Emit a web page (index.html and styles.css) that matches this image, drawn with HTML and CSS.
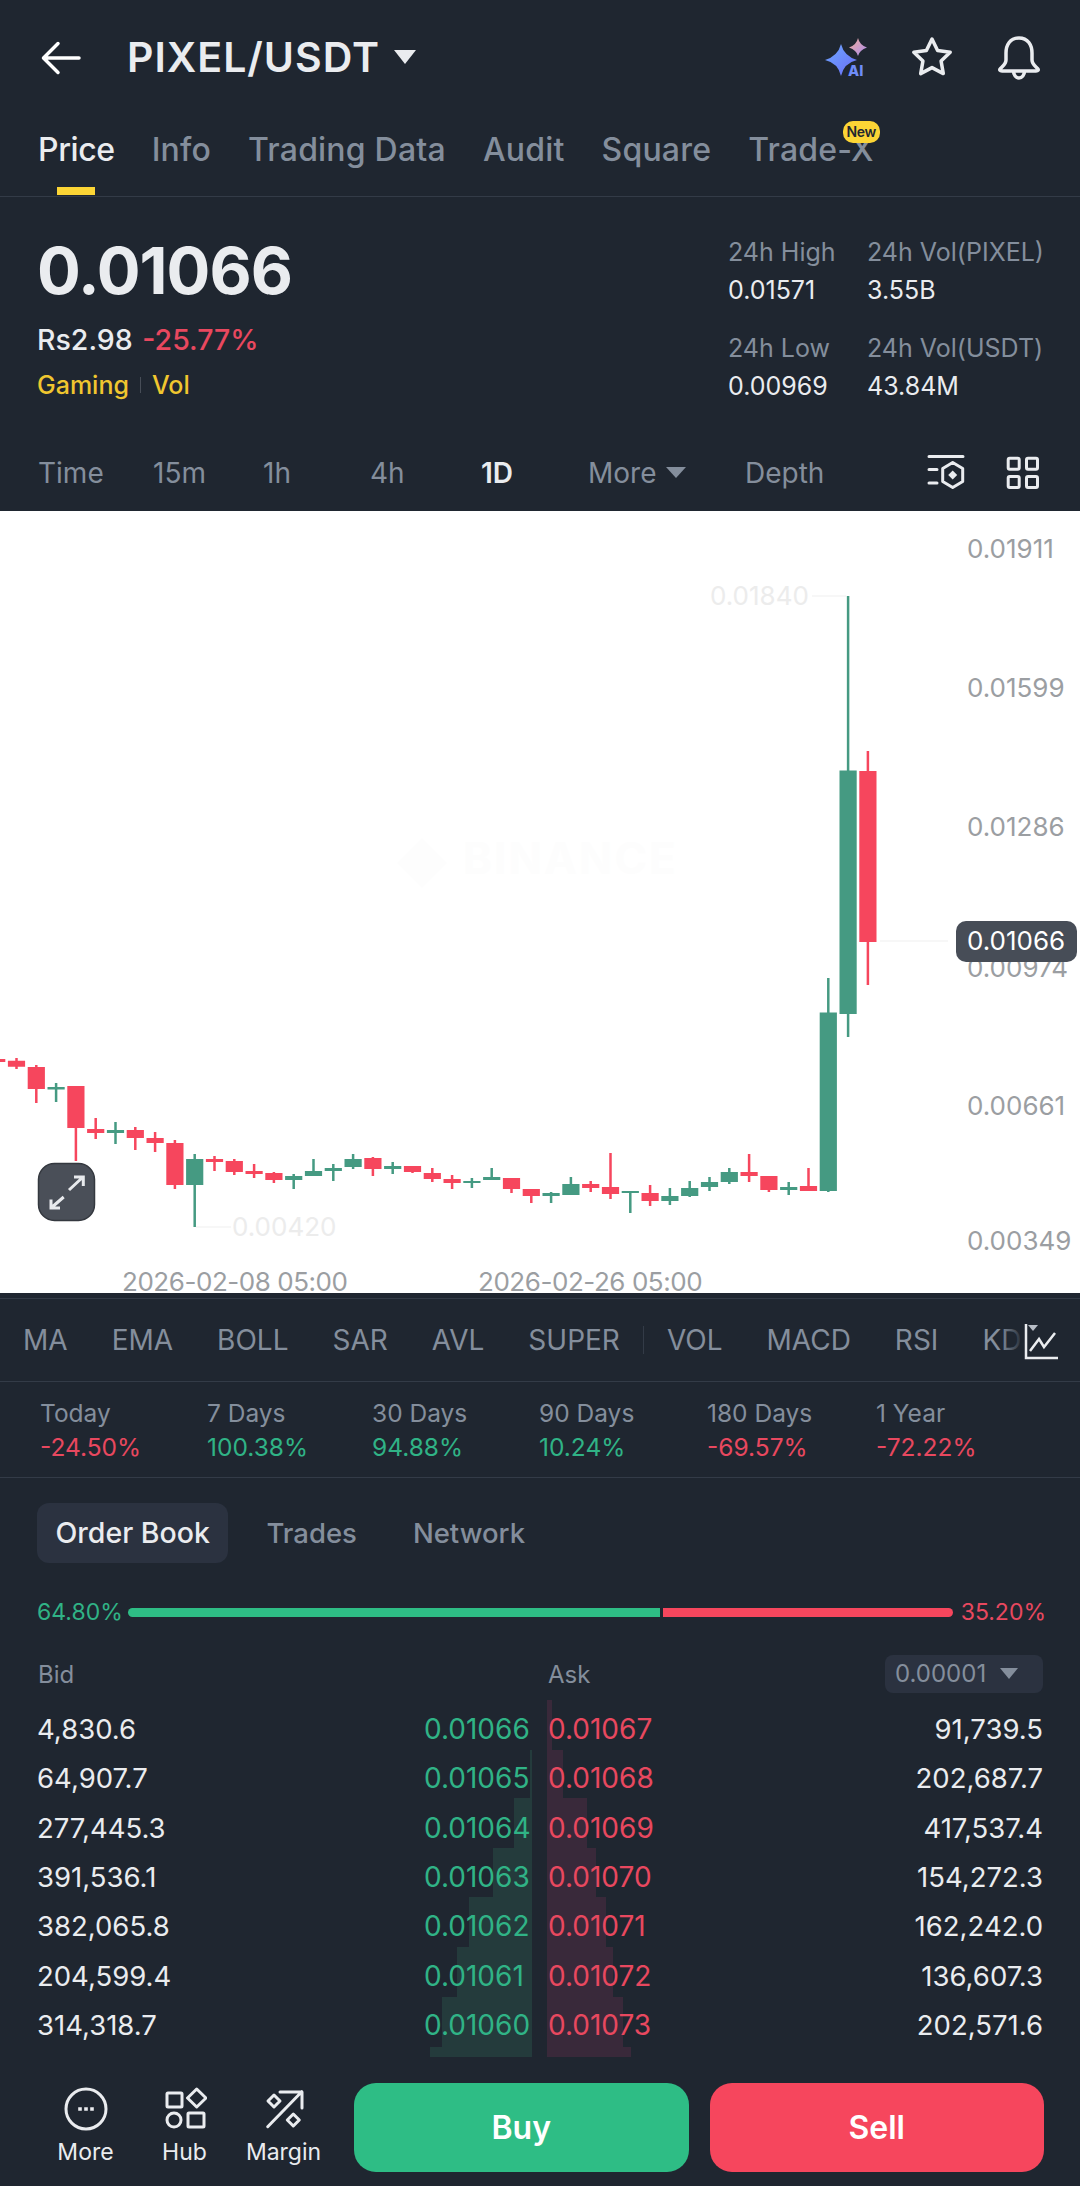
FILE: index.html
```html
<!DOCTYPE html>
<html lang="en">
<head>
    <meta charset="UTF-8">
    <meta name="viewport" content="width=device-width, initial-scale=1.0">
    <title>PIXEL/USDT</title>
    <link rel="stylesheet" href="styles.css">
</head>
<body>
    <!-- --- HEADER --- -->
    <header class="header">
        <svg class="back" width="46" height="40" viewBox="0 0 46 40"><path d="M41 20H6.500M20 5.500 5.500 20 20 34.500"/></svg>
        <span class="pair">PIXEL/USDT</span>
        <span class="caret caret-title"></span>
        <div class="header-icons">
            <svg width="44" height="46" viewBox="0 0 44 46">
                <defs>
                    <linearGradient id="big" x1="0" y1="0" x2="1" y2="1"><stop offset="0" stop-color="#6ea8ff"/><stop offset="1" stop-color="#6a6cf6"/></linearGradient>
                    <linearGradient id="small" x1="0" y1="0" x2="1" y2="1"><stop offset="0" stop-color="#f2ab96"/><stop offset="1" stop-color="#a88cf2"/></linearGradient>
                </defs>
                <path fill="url(#big)" d="M18 9Q21 21 34 25Q21 28 18 41Q15 28 2 25Q15 21 18 9Z"/>
                <path fill="url(#small)" d="M35 3Q36.500 10 44 12.500Q36.500 15 35 21Q33.500 15 26 12.500Q33.500 10 35 3Z"/>
                <text class="ai-text" x="25" y="41">AI</text>
            </svg>
            <svg class="line-icon" width="44" height="46" viewBox="0 0 44 46"><path d="M22 4l5.600 11.400 12.600 1.800-9.100 8.900 2.200 12.500L22 32.600l-11.300 6 2.200-12.500-9.100-8.900 12.600-1.800z"/></svg>
            <svg class="line-icon" width="44" height="46" viewBox="0 0 44 46"><path d="M22 3C13 3 9 10 9 18V25C9 29 6 31 3.500 33.500C2 35 3 36 5 36H39C41 36 42 35 40.500 33.500C38 31 35 29 35 25V18C35 10 31 3 22 3ZM16.500 36C16.500 40 19 43 22 43C25 43 27.500 40 27.500 36"/></svg>
        </div>
    </header>

    <!-- --- TABS --- -->
    <nav class="tabs">
        <span class="tab tab-active">Price</span>
        <span class="tab">Info</span>
        <span class="tab">Trading Data</span>
        <span class="tab">Audit</span>
        <span class="tab">Square</span>
        <span class="tab tab-new">Trade-X<span class="badge">New</span></span>
    </nav>

    <!-- --- PRICE SUMMARY --- -->
    <section class="summary">
        <div class="summary-main">
            <div class="last-price">0.01066</div>
            <div class="fiat">Rs2.98 <span class="down">-25.77%</span></div>
            <div class="tags"><span>Gaming</span><i></i><span>Vol</span></div>
        </div>
        <div class="stats">
            <div class="stat-label">24h High</div><div class="stat-label">24h Vol(PIXEL)</div>
            <div class="stat-value">0.01571</div><div class="stat-value">3.55B</div>
            <div class="stat-label stat-gap">24h Low</div><div class="stat-label stat-gap">24h Vol(USDT)</div>
            <div class="stat-value">0.00969</div><div class="stat-value">43.84M</div>
        </div>
    </section>

    <!-- --- TIMEFRAMES --- -->
    <div class="frames">
        <span>Time</span>
        <span>15m</span>
        <span>1h</span>
        <span>4h</span>
        <span class="frame-active">1D</span>
        <span>More<b class="caret caret-more"></b></span>
        <span>Depth</span>
        <div class="frame-icons">
            <svg class="line-icon thin" width="40" height="40" viewBox="0 0 40 40"><path d="M3 3.500H37M3 16.500H11M3 30H11M26.700 9.500 36.700 15.500V28.500L26.700 34.500 16.700 28.500V15.500Z"/><path class="solid" d="M26.700 17.500 31.200 22 26.700 26.500 22.200 22Z"/></svg>
            <svg class="line-icon thin" width="38" height="38" viewBox="0 0 38 38"><rect x="4.200" y="4.200" width="11" height="11" rx="1.500"/><rect x="22.500" y="4.200" width="11" height="11" rx="1.500"/><rect x="4.200" y="22.500" width="11" height="11" rx="1.500"/><rect x="22.500" y="22.500" width="11" height="11" rx="1.500"/></svg>
        </div>
    </div>

    <!-- --- CHART --- -->
    <svg class="chart" width="1080" height="782" viewBox="0 511 1080 782">
        <text class="watermark" x="463" y="874">BINANCE</text>
        <path class="watermark-logo" d="M422 838 447 863 422 888 397 863Z"/>

        <path class="wick red" d="M-3.300 1059V1062M16.500 1058V1069M36.300 1065V1103M75.900 1086V1161M95.700 1118V1139M135.300 1127V1150M155.100 1132V1152M174.900 1140V1189M214.500 1156V1171M234.300 1159V1175M254.100 1164V1178M273.900 1172V1183M372.900 1157V1176M412.500 1166V1173M432.300 1168V1182M452.100 1175V1189M511.500 1178V1193M531.300 1189V1203M590.700 1181V1192M610.500 1153V1199M650.100 1185V1206M749.100 1154V1182M768.900 1176V1192M808.500 1168V1191M867.900 751V985"/>
        <path class="wick green" d="M56.100 1083V1102M115.500 1122V1144M194.700 1154V1227M293.700 1174V1189M313.500 1159V1176M333.300 1164V1181M353.100 1154V1169M392.700 1162V1174M471.900 1178V1188M491.700 1168V1180M551.100 1192V1203M570.900 1177V1195M630.300 1191V1213M669.900 1188V1205M689.700 1181V1197M709.500 1177V1191M729.300 1168V1184M788.700 1182V1195M828.300 978V1192M848.100 596V1037"/>
        <path class="body red" d="M-3.300 1059V1062M16.500 1060.700V1066.700M36.300 1067V1089M75.900 1086V1128M95.700 1129V1133M135.300 1130V1138M155.100 1138V1143M174.900 1143V1185M214.500 1159V1162M234.300 1161V1172M254.100 1171V1174M273.900 1173V1180M372.900 1158V1169M412.500 1166V1172M432.300 1173V1179M452.100 1179V1183M511.500 1178V1189M531.300 1189V1196M590.700 1184V1188M610.500 1187V1194M650.100 1193V1201M749.100 1172V1176M768.900 1176V1190M808.500 1186V1191M867.900 771V942"/>
        <path class="body green" d="M56.100 1087V1089.500M115.500 1130V1133M194.700 1159V1185M293.700 1176V1180M313.500 1171V1176M333.300 1168V1171M353.100 1159V1167M392.700 1166V1169M471.900 1181V1183M491.700 1177V1180M551.100 1193V1196M570.900 1184V1195M630.300 1191V1193M669.900 1196V1201M689.700 1188V1196M709.500 1182V1187M729.300 1172V1182M788.700 1187V1190M828.300 1012.500V1191M848.100 770.500V1014"/>

        <path class="hair" d="M812 596H846M196 1227H231M880 941H948"/>
        <text class="extreme" x="710" y="605">0.01840</text>
        <text class="extreme" x="232" y="1236">0.00420</text>

        <text class="axis" x="967" y="558">0.01911</text>
        <text class="axis" x="967" y="697">0.01599</text>
        <text class="axis" x="967" y="836">0.01286</text>
        <text class="axis" x="967" y="977">0.00974</text>
        <text class="axis" x="967" y="1115">0.00661</text>
        <text class="axis" x="967" y="1250">0.00349</text>
        <text class="axis axis-date" x="122" y="1291">2026-02-08 05:00</text>
        <text class="axis axis-date" x="478" y="1291">2026-02-26 05:00</text>

        <rect class="tag" x="956" y="921" width="121" height="41" rx="10"/>
        <text class="tag-text" x="967" y="950">0.01066</text>

        <rect class="expand" x="38.500" y="1163.500" width="56" height="57" rx="16"/>
        <path class="expand-arrows" d="M69 1190 83 1177M74 1177H83.300V1186M63.700 1197 51 1208M51 1199.500V1208H60"/>
    </svg>

    <!-- --- INDICATORS --- -->
    <div class="indicators">
        <span>MA</span><span>EMA</span><span>BOLL</span><span>SAR</span><span>AVL</span><span>SUPER</span>
        <i class="ind-divider"></i>
        <span>VOL</span><span>MACD</span><span>RSI</span><span>KDJ</span>
        <div class="ind-chart">
            <svg width="38" height="38" viewBox="0 0 38 38"><path class="ind-tri" d="M8 2H18L13 8Z"/><path class="ind-line" d="M6 1V35H38M10 28 19 16 24 24 35 10"/></svg>
        </div>
    </div>

    <!-- --- PERIOD CHANGES --- -->
    <div class="periods">
        <div><div class="period-label">Today</div><div class="period-value down">-24.50%</div></div>
        <div><div class="period-label">7 Days</div><div class="period-value up">100.38%</div></div>
        <div><div class="period-label">30 Days</div><div class="period-value up">94.88%</div></div>
        <div><div class="period-label">90 Days</div><div class="period-value up">10.24%</div></div>
        <div><div class="period-label">180 Days</div><div class="period-value down">-69.57%</div></div>
        <div><div class="period-label">1 Year</div><div class="period-value down">-72.22%</div></div>
    </div>

    <!-- --- ORDER BOOK --- -->
    <div class="book-tabs">
        <span class="book-tab book-tab-active">Order Book</span>
        <span class="book-tab">Trades</span>
        <span class="book-tab">Network</span>
    </div>

    <div class="ratio">
        <span class="up">64.80%</span>
        <div class="ratio-bar"><i class="ratio-bid"></i><i class="ratio-ask"></i></div>
        <span class="down ratio-right">35.20%</span>
    </div>

    <div class="book-head">
        <span class="book-head-bid">Bid</span>
        <span class="book-head-ask">Ask</span>
        <span class="step">0.00001<b class="caret caret-step"></b></span>
    </div>

    <div class="book">
        <svg class="depth" width="1080" height="360" viewBox="0 1700 1080 360">
            <path class="depth-bid" d="M532 1750H530V1798H514V1848H493V1897H469V1947H457V1997H442V2047H430V2057H532Z"/>
            <path class="depth-ask" d="M547 1700H552V1750H563V1798H587V1848H596V1897H606V1947H613V1997H623V2047H631V2057H547Z"/>
        </svg>
        <div class="row"><div class="side"><span>4,830.6</span><span class="price up">0.01066</span></div><div class="side"><span class="price down">0.01067</span><span>91,739.5</span></div></div>
        <div class="row"><div class="side"><span>64,907.7</span><span class="price up">0.01065</span></div><div class="side"><span class="price down">0.01068</span><span>202,687.7</span></div></div>
        <div class="row"><div class="side"><span>277,445.3</span><span class="price up">0.01064</span></div><div class="side"><span class="price down">0.01069</span><span>417,537.4</span></div></div>
        <div class="row"><div class="side"><span>391,536.1</span><span class="price up">0.01063</span></div><div class="side"><span class="price down">0.01070</span><span>154,272.3</span></div></div>
        <div class="row"><div class="side"><span>382,065.8</span><span class="price up">0.01062</span></div><div class="side"><span class="price down">0.01071</span><span>162,242.0</span></div></div>
        <div class="row"><div class="side"><span>204,599.4</span><span class="price up">0.01061</span></div><div class="side"><span class="price down">0.01072</span><span>136,607.3</span></div></div>
        <div class="row"><div class="side"><span>314,318.7</span><span class="price up">0.01060</span></div><div class="side"><span class="price down">0.01073</span><span>202,571.6</span></div></div>
    </div>

    <!-- --- BOTTOM BAR --- -->
    <footer class="bottom">
        <div class="tool">
            <svg class="line-icon thin" width="44" height="44" viewBox="0 0 44 44"><circle cx="22" cy="22" r="20"/><path class="dots" d="M14.200 22H17.800M20.200 22H23.800M26.200 22H29.800"/></svg>
            <span>More</span>
        </div>
        <div class="tool">
            <svg class="line-icon thin" width="44" height="44" viewBox="0 0 44 44"><rect x="4" y="6" width="15" height="14" rx="1"/><path d="M33.700 2 43 11 33.700 20 24.500 11Z"/><circle cx="11" cy="33" r="7"/><rect x="25" y="26" width="16" height="14" rx="1"/></svg>
            <span>Hub</span>
        </div>
        <div class="tool">
            <svg class="line-icon thin" width="44" height="44" viewBox="0 0 44 44"><path d="M5.700 39.700 39.700 4.700M18 5H40V21M12 8 18 14 12 20 6 14ZM31.300 27 37.300 33 31.300 39 25.300 33Z"/></svg>
            <span>Margin</span>
        </div>
        <button class="trade trade-buy">Buy</button>
        <button class="trade trade-sell">Sell</button>
    </footer>
</body>
</html>
```

FILE: styles.css
```css
/* --- RESET & GLOBAL STYLES --- */
* {
    margin: 0;
    padding: 0;
    box-sizing: border-box;
}

body {
    width: 1080px;
    height: 2186px;
    overflow: hidden;
    background-color: #1f2630;
    font-family: Inter, "Noto Sans", sans-serif;
    color: #eaecef;
}

.up {
    color: #30b386;
}

.down {
    color: #e8485f;
}

.caret {
    display: inline-block;
    width: 0;
    height: 0;
    border-style: solid;
    border-color: transparent;
}

.line-icon {
    display: block;
    fill: none;
    stroke: #eaecef;
    stroke-width: 3.5;
    stroke-linejoin: round;
    stroke-linecap: round;
}

.line-icon.thin {
    stroke-width: 3;
}

.line-icon .solid {
    fill: #eaecef;
    stroke: none;
}

/* --- HEADER --- */
.header {
    height: 114px;
    display: flex;
    align-items: center;
    padding: 0 39px 0 38px;
}

.back {
    margin-top: 2px;
    fill: none;
    stroke: #fff;
    stroke-width: 3.5;
    stroke-linecap: round;
    stroke-linejoin: round;
}

.pair {
    margin-left: 43px;
    font-size: 41px;
    font-weight: 600;
    letter-spacing: 1px;
    color: #eaecef;
}

.caret-title {
    margin-left: 14px;
    border-width: 14px 11px 0;
    border-top-color: #eaecef;
}

.header-icons {
    margin-top: 2px;
    margin-left: auto;
    display: flex;
    align-items: center;
    gap: 43px;
}

.ai-text {
    font-size: 14.5px;
    font-weight: 800;
    fill: #6f8cf8;
}

/* --- TABS --- */
.tabs {
    height: 83px;
    display: flex;
    gap: 37px;
    padding: 16px 0 0 38px;
    border-bottom: 1px solid #333b47;
}

.tab {
    position: relative;
    height: 40px;
    line-height: 40px;
    font-size: 32px;
    font-weight: 500;
    letter-spacing: 0.2px;
    color: #848e9c;
}

.tab-active {
    color: #eaecef;
    letter-spacing: -0.4px;
}

.tab-active::after {
    content: "";
    position: absolute;
    left: 19px;
    top: 57px;
    width: 38px;
    height: 8px;
    background-color: #fcd535;
}

.badge {
    position: absolute;
    right: -6px;
    top: -9px;
    width: 37px;
    height: 22px;
    line-height: 22px;
    border-radius: 10px;
    background-color: #fcd535;
    color: #202630;
    font-size: 14px;
    font-weight: 600;
    letter-spacing: -0.3px;
    text-align: center;
}

/* --- PRICE SUMMARY --- */
.summary {
    height: 238px;
    display: flex;
    justify-content: space-between;
    padding: 36px 36px 0 37px;
}

.last-price {
    height: 76px;
    line-height: 76px;
    font-size: 65px;
    font-weight: 700;
    letter-spacing: -1px;
}

.fiat {
    margin-top: 13px;
    line-height: 36px;
    font-size: 28.5px;
    font-weight: 500;
    word-spacing: 2px;
}

.tags {
    margin-top: 9px;
    display: flex;
    align-items: center;
    line-height: 36px;
    font-size: 25px;
    font-weight: 500;
    color: #f0c62f;
}

.tags i {
    width: 1px;
    height: 16px;
    margin: 0 11px;
    background-color: #474d57;
}

.stats {
    display: grid;
    grid-template-columns: 139px auto;
    align-content: start;
    font-size: 25px;
    line-height: 38px;
}

.stat-label {
    color: #848e9c;
}

.stat-gap {
    margin-top: 20px;
}

/* --- TIMEFRAMES --- */
.frames {
    height: 76px;
    display: grid;
    grid-template-columns: 115px 110px 107px 111px 107px 157px 1fr auto;
    align-items: center;
    padding: 0 38px;
    font-size: 28px;
    color: #848e9c;
}

.frame-active {
    color: #eaecef;
    font-weight: 600;
}

.caret-more {
    margin-left: 10px;
    vertical-align: 5px;
    border-width: 11px 10px 0;
    border-top-color: #848e9c;
}

.frame-icons {
    display: flex;
    align-items: center;
    gap: 38px;
}

/* --- CHART --- */
.chart {
    display: block;
    background-color: #fff;
}

.wick,
.body {
    fill: none;
}

.wick {
    stroke-width: 2.5;
}

.body {
    stroke-width: 17.2;
}

.wick.red,
.body.red {
    stroke: #f6465d;
}

.wick.green,
.body.green {
    stroke: #459a82;
}

.hair {
    fill: none;
    stroke: #efefef;
    stroke-width: 1;
}

.axis,
.extreme,
.tag-text {
    font-size: 26px;
}

.axis {
    fill: #9b9ea2;
}

.axis-date {
    letter-spacing: -0.45px;
}

.extreme {
    fill: #ececec;
}

.tag {
    fill: #474d57;
}

.tag-text {
    fill: #fff;
}

.watermark {
    font-size: 44px;
    font-weight: 700;
    letter-spacing: 2px;
    fill: #fdfdfd;
}

.watermark-logo {
    fill: #fdfdfd;
}

.expand {
    fill: #4a4f58;
    stroke: #34383f;
    stroke-width: 1.5;
}

.expand-arrows {
    fill: none;
    stroke: #e8eaed;
    stroke-width: 3;
}

/* --- INDICATORS --- */
.indicators {
    position: relative;
    height: 84px;
    margin-top: 5px;
    display: flex;
    align-items: center;
    gap: 44px;
    padding-left: 23px;
    overflow: hidden;
    border-top: 1px solid #333b47;
    border-bottom: 1px solid #333b47;
    font-size: 28px;
    color: #848e9c;
    white-space: nowrap;
}

.ind-divider {
    width: 1px;
    height: 28px;
    margin: 0 -21px;
    background-color: #333b47;
}

.ind-chart {
    position: absolute;
    right: 0;
    top: 0;
    width: 80px;
    height: 100%;
    padding: 24px 0 0 20px;
    background: linear-gradient(to right, rgba(31, 38, 48, 0), #1f2630 30%);
}

.ind-chart svg {
    display: block;
    fill: none;
}

.ind-tri {
    fill: #b7bdc6;
}

.ind-line {
    stroke: #eaecef;
    stroke-width: 2.5;
}

/* --- PERIOD CHANGES --- */
.periods {
    height: 96px;
    display: grid;
    grid-template-columns: 167px 165px 167px 168px 169px auto;
    padding: 14px 0 0 40px;
    border-bottom: 1px solid #333b47;
    font-size: 24.5px;
    line-height: 34px;
}

.period-label {
    color: #848e9c;
}

/* --- ORDER BOOK --- */
.book-tabs {
    height: 60px;
    margin-top: 25px;
    display: flex;
    gap: 20px;
    padding-left: 37px;
}

.book-tab {
    padding: 0 18px;
    line-height: 60px;
    font-size: 27.5px;
    font-weight: 500;
    color: #848e9c;
    border-radius: 12px;
}

.book-tab-active {
    padding: 0 18.5px;
    font-size: 28.5px;
    color: #eaecef;
    background-color: #2b3240;
}

.ratio {
    height: 24px;
    margin-top: 37px;
    display: flex;
    align-items: center;
    gap: 5px;
    padding: 0 34px 0 37px;
    font-size: 23px;
}

.ratio-right {
    margin-left: 3px;
}

.ratio-bar {
    flex: 1;
    display: flex;
    gap: 3px;
}

.ratio-bar i {
    height: 9px;
}

.ratio-bid {
    flex: 648;
    background-color: #2ebd85;
    border-radius: 5px 0 0 5px;
}

.ratio-ask {
    flex: 352;
    background-color: #f6465d;
    border-radius: 0 5px 5px 0;
}

.book-head {
    height: 38px;
    margin-top: 31px;
    display: flex;
    align-items: center;
    padding: 0 37px 0 38px;
    font-size: 24px;
    color: #848e9c;
}

.book-head-bid {
    width: 510px;
}

.step {
    margin-left: auto;
    height: 38px;
    width: 158px;
    padding-left: 10px;
    line-height: 38px;
    border-radius: 8px;
    background-color: #2b3240;
}

.caret-step {
    margin-left: 14px;
    vertical-align: 3px;
    border-width: 11px 9px 0;
    border-top-color: #848e9c;
}

.book {
    position: relative;
    margin-top: 7px;
    padding-top: 4.5px;
}

.depth {
    position: absolute;
    left: 0;
    top: 0;
}

.depth-bid {
    fill: #243b3c;
}

.depth-ask {
    fill: #39293a;
}

.row {
    position: relative;
    height: 49.3px;
    display: grid;
    grid-template-columns: 493px 495px;
    column-gap: 18px;
    align-items: center;
    padding-left: 37px;
    font-size: 27.5px;
}

.side {
    display: flex;
    justify-content: space-between;
}

.price {
    width: 106px;
    font-size: 28px;
}

/* --- BOTTOM BAR --- */
.bottom {
    display: flex;
    gap: 21px;
    padding: 33px 36px 0 36px;
}

.bottom .tool {
    width: 99px;
    margin-right: -21px;
    padding-top: 4px;
    display: flex;
    flex-direction: column;
    align-items: center;
    font-size: 23px;
    line-height: 28px;
    color: #eaecef;
}

.tool span {
    margin-top: 7px;
}

.bottom .tool:nth-child(3) {
    margin-right: 0;
}

.dots {
    stroke-width: 3.6;
    stroke-linecap: butt;
}

.trade {
    flex: 1;
    height: 89px;
    border: none;
    border-radius: 22px;
    font-family: inherit;
    font-size: 32px;
    font-weight: 600;
    color: #fff;
}

.trade-buy {
    background-color: #2ebd85;
}

.trade-sell {
    background-color: #f6465d;
}
```
